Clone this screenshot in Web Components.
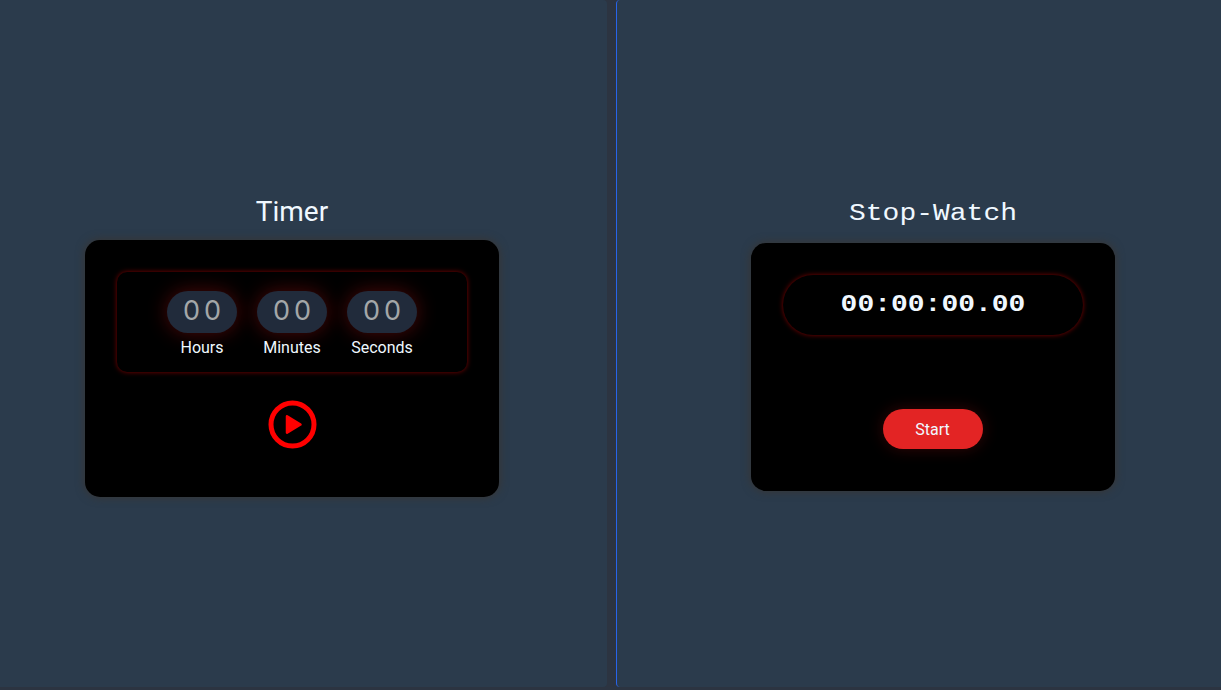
<!DOCTYPE html>
<html lang="en"><head><meta charset="utf-8"><title>Timer and Stop-Watch</title>
<style>html,body{margin:0;height:100%;overflow:hidden;background:#2c3441}</style></head>
<body><clock-app></clock-app>
<script>
const define=(name,html)=>customElements.define(name,class extends HTMLElement{
  constructor(){super();this.attachShadow({mode:'open'}).innerHTML=html;
    const label=this.shadowRoot.querySelector('[data-label]');
    if(label)label.textContent=this.getAttribute('label')}
});
define('time-field',`<style>
:host{display:flex;flex-direction:column;align-items:center;width:70px}
.value{box-sizing:border-box;width:70px;height:42px;border-radius:21px;background:#212b3b;color:#a4a7a9;box-shadow:0 0 20px rgba(255,28,28,.3);font:27px/40px Inter,sans-serif;letter-spacing:4px;text-align:center;padding-left:4px}
.label{font-size:16px;line-height:19px;margin-top:5px}
</style><div class="value">00</div><div class="label" data-label></div>`);
define('play-button',`<style>:host{display:block;width:50px;height:50px}svg{display:block}</style>
<svg width="50" height="50" viewBox="0 0 50 50"><circle cx="25.5" cy="24.5" r="21.5" fill="none" stroke="red" stroke-width="5"/><path d="M20 16.3L33.5 24.5L20 32.7Z" fill="red" stroke="red" stroke-width="2.5" stroke-linejoin="round"/></svg>`);
define('timer-card',`<style>
:host{display:block;width:414px}
h1{font:400 28px/33px Roboto,sans-serif;text-align:center;margin:0 0 12px}
.card{box-sizing:border-box;height:257px;padding:32px;border-radius:15px;background:#000;box-shadow:0 0 10px #3a3530;display:flex;flex-direction:column;align-items:center}
.fields{box-sizing:border-box;width:350px;height:100px;border-radius:10px;box-shadow:0 0 5px rgba(255,0,0,.5);padding-top:19px;display:flex;justify-content:center;gap:20px}
play-button{margin-top:28px}
</style><h1>Timer</h1><div class="card"><div class="fields"><time-field label="Hours"></time-field><time-field label="Minutes"></time-field><time-field label="Seconds"></time-field></div><play-button></play-button></div>`);
define('stopwatch-card',`<style>
:host{display:block;width:364px}
h1{font:400 28px/32px "Courier New","Liberation Mono",monospace;text-align:center;margin:0 0 15px;transform-origin:0 31px;transform:scaleY(.88)}
.card{box-sizing:border-box;height:248px;padding:32px;border-radius:15px;background:#000;box-shadow:0 0 10px #3a3530;display:flex;flex-direction:column;align-items:center}
.readout{width:300px;height:60px;border-radius:30px;box-shadow:0 0 5px rgba(255,0,0,.5);font:700 28px/57px "Courier New","Liberation Mono",monospace;text-align:center}
.readout span{display:block;transform-origin:0 36px;transform:scaleY(.86)}
button{width:100px;height:40px;margin-top:74px;padding:1px 1px 0 0;border:0;border-radius:20px;background:#e32424;color:#f0f8ff;font:400 16px/39px Roboto,sans-serif;box-shadow:0 0 16px rgba(255,28,28,.2)}
</style><h1>Stop-Watch</h1><div class="card"><div class="readout"><span>00:00:00.00</span></div><button>Start</button></div>`);
define('clock-app',`<style>
:host{box-sizing:border-box;height:100vh;display:grid;grid-template-columns:607px 605px;gap:9px;padding-bottom:3px;color:#f0f8ff;font:16px Roboto,sans-serif}
.panel{box-sizing:border-box;background:#2b3b4c;display:flex;align-items:flex-start}
.left{border-radius:0 4px 4px 0;padding:195px 0 0 85px}
.right{border-left:1px solid #2864eb;border-radius:4px 0 0 4px;padding:196px 0 0 134px}
</style><section class="panel left"><timer-card></timer-card></section><section class="panel right"><stopwatch-card></stopwatch-card></section>`);
</script></body></html>
